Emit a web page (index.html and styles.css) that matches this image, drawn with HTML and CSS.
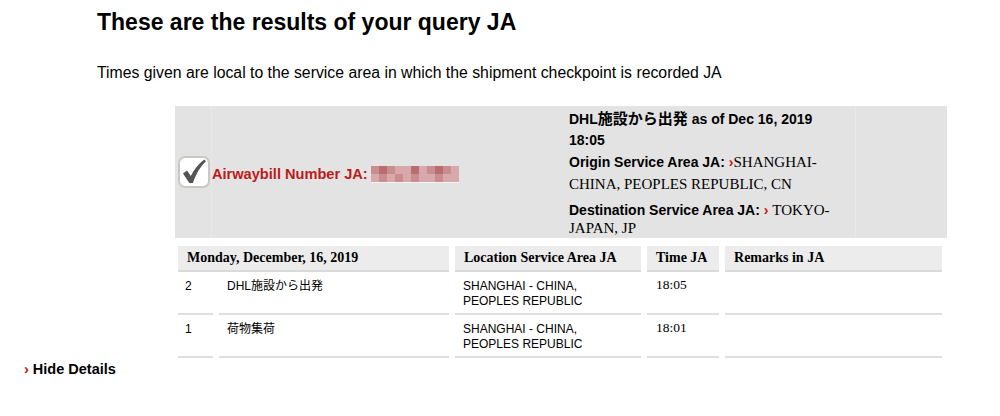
FILE: index.html
```html
<!DOCTYPE html>
<html>
<head>
<meta http-equiv="Content-Type" content="text/html; charset=utf-8"/>
<title>Tracking results</title>
<link rel="stylesheet" href="styles.css">
</head>
<body>

<h1 class="title">These are the results of your query JA</h1>

<p class="intro">Times given are local to the service area in which the shipment checkpoint is recorded JA</p>

<div class="results">
  <div class="summary">
    <div class="cell-check">
      <svg class="check" width="32" height="32" viewBox="0 0 32 32">
        <rect x="1" y="1" width="30" height="30" rx="6" ry="6" fill="#fff" stroke="#c9c9c4" stroke-width="2"/>
        <path d="M5 17.5 L9 14.5 L12.8 20 C16 13.5 20.5 8 26.2 3.6 L28 5.2 C22.5 10.5 18 17.5 15 27 L11.3 27 Z" fill="#555"/>
      </svg>
    </div>
    <div class="cell-awb">
      <span class="awb-label">Airwaybill Number JA:</span>
      <span class="awb-number">
        <span class="px b"></span><span class="px c"></span><span class="px b"></span><span class="px a"></span><span class="px a"></span><span class="px c"></span><span class="px a"></span><span class="px b"></span><span class="px c"></span><span class="px b"></span><span class="px a"></span>
        <span class="px a"></span><span class="px b"></span><span class="px a"></span><span class="px b"></span><span class="px a"></span><span class="px b"></span><span class="px a"></span><span class="px a"></span><span class="px b"></span><span class="px a"></span><span class="px a"></span>
      </span>
    </div>
    <div class="cell-info">
      <div class="status">DHL<span class="cjk">施設から出発</span> as of Dec 16, 2019 18:05</div>
      <div class="origin"><b>Origin Service Area JA: </b><span class="chev">›</span><span class="place">SHANGHAI-CHINA, PEOPLES REPUBLIC, CN</span></div>
      <div class="dest"><b>Destination Service Area JA: </b><span class="chev">›</span> <span class="place">TOKYO-JAPAN, JP</span></div>
    </div>
    <div class="cell-empty"></div>
  </div>

  <table class="events">
    <colgroup>
      <col class="c-num"><col class="c-desc"><col class="c-loc"><col class="c-time"><col class="c-rem">
    </colgroup>
    <thead>
      <tr>
        <th colspan="2">Monday, December, 16, 2019</th>
        <th>Location Service Area JA</th>
        <th>Time JA</th>
        <th>Remarks in JA</th>
      </tr>
    </thead>
    <tbody>
      <tr>
        <td>2</td>
        <td>DHL施設から出発</td>
        <td>SHANGHAI - CHINA,<br>PEOPLES REPUBLIC</td>
        <td class="time">18:05</td>
        <td></td>
      </tr>
      <tr>
        <td>1</td>
        <td>荷物集荷</td>
        <td>SHANGHAI - CHINA,<br>PEOPLES REPUBLIC</td>
        <td class="time">18:01</td>
        <td></td>
      </tr>
    </tbody>
  </table>
</div>

<a class="toggle" href="#"><span class="chev">›</span> Hide Details</a>

</body>
</html>
```

FILE: styles.css
```css
body {
  margin: 0;
  background-color: white;
  font-family: "Liberation Sans", Arial, "Noto Sans CJK JP", sans-serif;
  color: #000;
}

.title {
  margin: 0;
  padding: 8px 0 0 97px;
  font-size: 23px;
  line-height: 28px;
}

.intro {
  margin: 0;
  padding: 28px 0 0 97px;
  font-size: 15.8px;
  line-height: 18px;
}

.results {
  width: 772px;
  margin: 24px 0 0 175px;
}

/* grey summary panel */
.summary {
  display: flex;
  background-color: #e3e3e3;
  min-height: 132px;
}

.cell-check {
  width: 36px;
  display: flex;
  align-items: center;
  border-right: 1px solid #e9e9e9;
}

.check {
  display: block;
  margin-left: 3px;
}

.cell-awb {
  flex: 1;
  display: flex;
  align-items: center;
  padding-top: 4px;
}

.awb-label {
  color: #bd1a1a;
  font-weight: bold;
  font-size: 14.6px;
}

.awb-number {
  display: inline-grid;
  grid-template-columns: repeat(11, 8px);
  grid-auto-rows: 8px;
  margin-left: 3px;
  border-bottom: 1px solid #f4f4f4;
}

.px.a { background-color: #d7a9aa; }
.px.b { background-color: #c98d8f; }
.px.c { background-color: #b86e71; }

.cell-info {
  width: 272px;
  padding: 2px 14px 0 8px;
  font-size: 14px;
  font-weight: bold;
}

.status {
  line-height: 21px;
}

.cjk {
  font-size: 15px;
}

.origin {
  line-height: 22px;
}

.dest {
  margin-top: 6px;
  line-height: 18px;
}

.place {
  font-family: "Liberation Serif", "Times New Roman", serif;
  font-weight: normal;
  font-size: 15px;
}

.chev {
  color: #cc1010;
  font-weight: bold;
}

.cell-empty {
  width: 91px;
  border-left: 1px solid #e9e9e9;
}

/* events table */
.events {
  table-layout: fixed;
  width: 776px;
  margin-left: -3px;
  margin-top: 8px;
  border-collapse: separate;
  border-spacing: 6px 0;
}

.c-num { width: 35px; }
.c-desc { width: 230px; }
.c-loc { width: 186px; }
.c-time { width: 72px; }
.c-rem { width: 217px; }

.events th {
  background-color: #ececec;
  border-bottom: 2px solid #dadada;
  font-family: "Liberation Serif", "Times New Roman", serif;
  font-size: 14px;
  text-align: left;
  padding: 3px 9px 4px;
  line-height: 17px;
}

.events td {
  vertical-align: top;
  font-size: 12px;
  line-height: 15px;
  padding: 7px 8px 4px;
  height: 30px;
  border-bottom: 2px solid #dedede;
}

.events td:first-child {
  padding-left: 7px;
}

.events td.time {
  font-family: "Liberation Serif", "Times New Roman", serif;
  font-size: 13.5px;
  padding-top: 5px;
  padding-bottom: 6px;
  padding-left: 9px;
}

.toggle {
  display: block;
  margin: 3px 0 0 24px;
  font-size: 14.5px;
  font-weight: bold;
  color: #000;
  text-decoration: none;
}
```
